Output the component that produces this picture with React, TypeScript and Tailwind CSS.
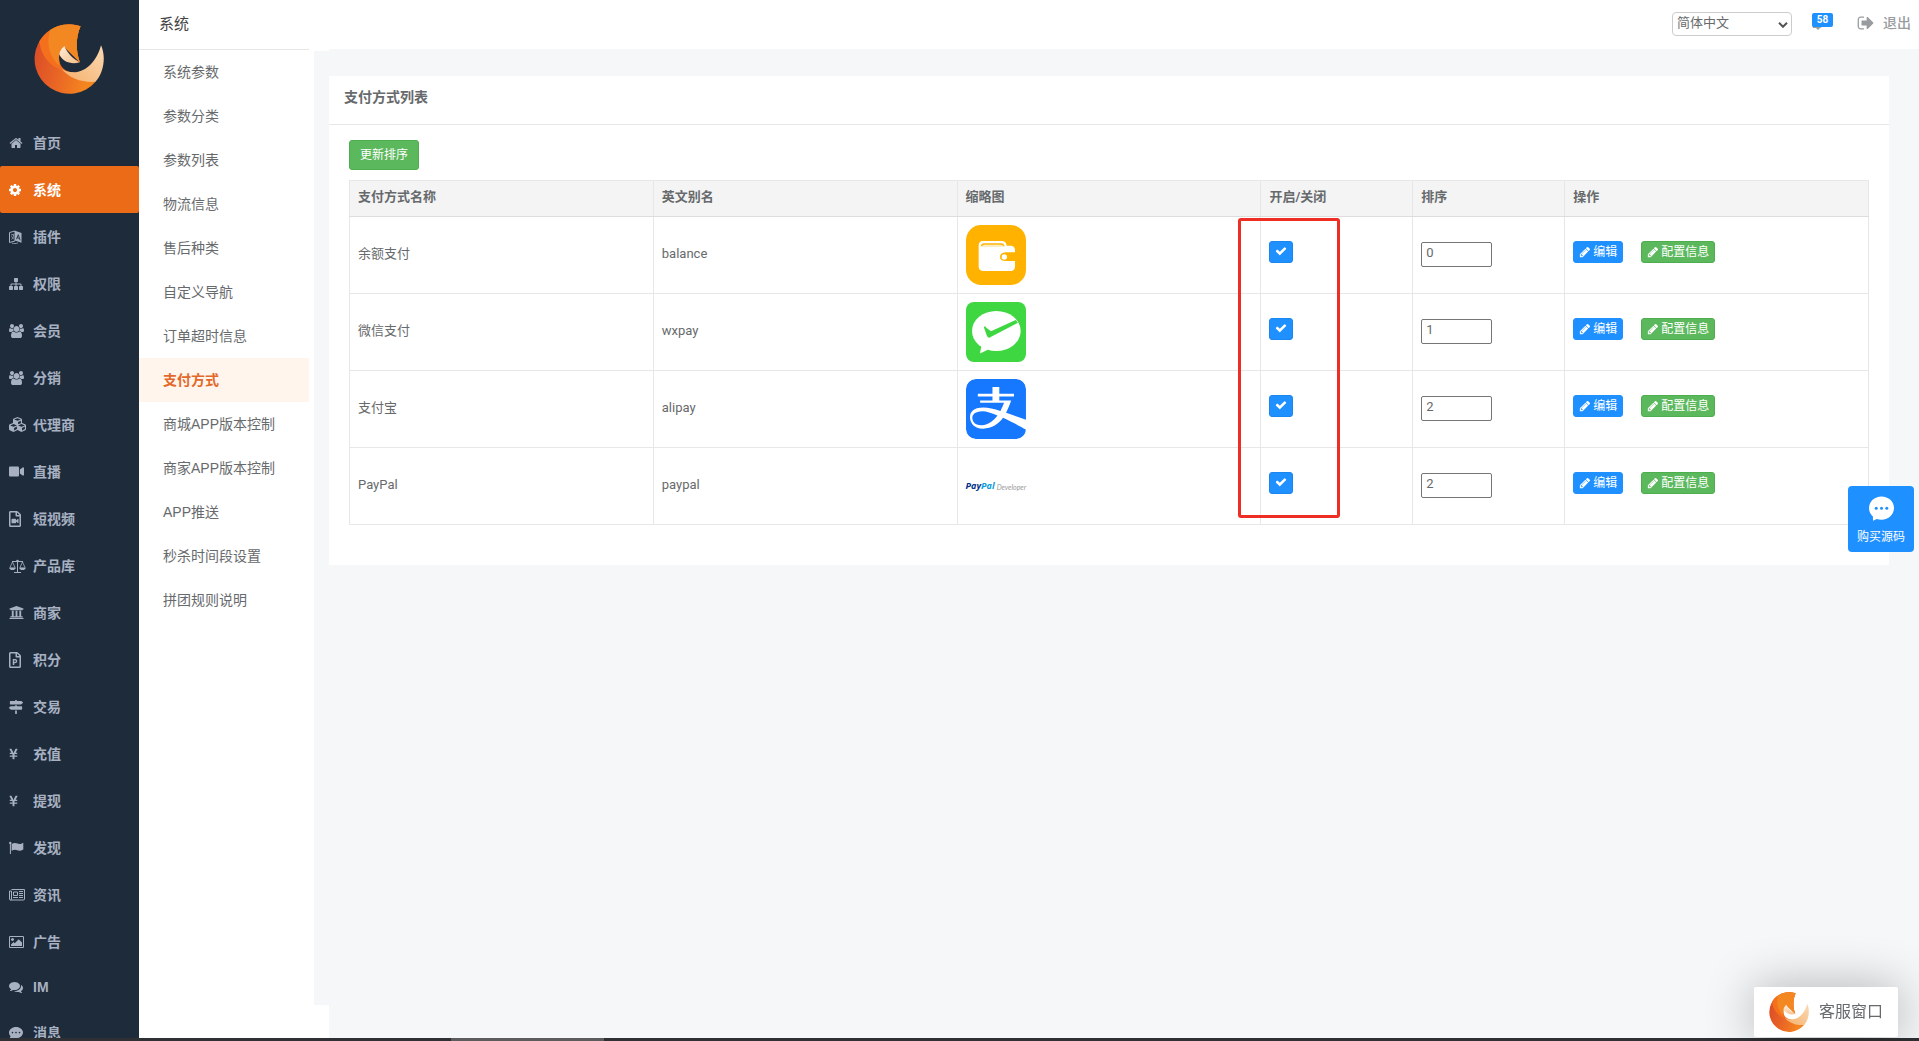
import React from "react";
import {
  FaCommentDots,
  FaCubes,
  FaMapSigns,
  FaRegFilePowerpoint,
  FaRegFileVideo,
  FaUniversity,
  FaVideo,
  FaYenSign,
  FaAlipay,
} from "react-icons/fa";

type GlyphProps = { d: string; className?: string; viewBox?: string };

function Glyph({ d, className, viewBox = "0 0 1792 1792" }: GlyphProps) {
  return (
    <svg viewBox={viewBox} fill="currentColor" className={className} aria-hidden="true">
      <path d={d} />
    </svg>
  );
}

const HOME =
  "M1472 992v480q0 26-19 45t-45 19h-384v-384h-256v384h-384q-26 0-45-19t-19-45v-480q0-1 .5-3t.5-3l575-474 575 474q1 2 1 6zm223-69l-62 74q-8 9-21 11h-3q-13 0-21-7l-692-577-692 577q-12 8-24 7-13-2-21-11l-62-74q-8-10-7-23.5t11-21.5l719-599q32-26 76-26t76 26l244 204v-195q0-14 9-23t23-9h192q14 0 23 9t9 23v408l219 182q10 8 11 21.5t-7 23.5z";
const COG =
  "M1152 896q0-106-75-181t-181-75-181 75-75 181 75 181 181 75 181-75 75-181zm512-109v222q0 12-8 23t-20 13l-185 28q-19 54-39 91 35 50 107 138 10 12 10 25t-9 23q-27 37-99 108t-94 71q-12 0-26-9l-138-108q-44 23-91 38-16 136-29 186-7 28-36 28h-222q-14 0-24.5-8.5t-11.5-21.5l-28-184q-49-16-90-37l-141 107q-10 9-25 9-14 0-25-11-126-114-165-168-7-10-7-23 0-12 8-23 15-21 51-66.5t54-70.5q-27-50-41-99l-183-27q-13-2-21-12.5t-8-23.5v-222q0-12 8-23t19-13l186-28q14-46 39-92-40-57-107-138-10-12-10-24 0-10 9-23 26-36 98.5-107.5t94.5-71.5q13 0 26 10l138 107q44-23 91-38 16-136 29-186 7-28 36-28h222q14 0 24.5 8.5t11.5 21.5l28 184q49 16 90 37l142-107q9-9 24-9 13 0 25 10 129 119 165 170 7 8 7 22 0 12-8 23-15 21-51 66.5t-54 70.5q26 50 41 98l183 28q13 2 21 12.5t8 23.5z";
const SITEMAP =
  "M1792 1248v320q0 40-28 68t-68 28h-320q-40 0-68-28t-28-68v-320q0-40 28-68t68-28h96v-192h-512v192h96q40 0 68 28t28 68v320q0 40-28 68t-68 28h-320q-40 0-68-28t-28-68v-320q0-40 28-68t68-28h96v-192h-512v192h96q40 0 68 28t28 68v320q0 40-28 68t-68 28h-320q-40 0-68-28t-28-68v-320q0-40 28-68t68-28h96v-192q0-52 38-90t90-38h512v-192h-96q-40 0-68-28t-28-68v-320q0-40 28-68t68-28h320q40 0 68 28t28 68v320q0 40-28 68t-68 28h-96v192h512q52 0 90 38t38 90v192h96q40 0 68 28t28 68z";
const USERS =
  "M529 896q-162 5-265 128h-134q-82 0-138-40.5t-56-118.5q0-353 124-353 6 0 43.5 21t97.5 42.5 119 21.5q67 0 133-23-5 37-5 66 0 139 81 256zm1071 637q0 120-73 189.5t-194 69.5h-874q-121 0-194-69.5t-73-189.5q0-53 3.5-103.5t14-109 26.5-108.5 43-97.5 62-81 85.5-53.5 111.5-20q10 0 43 21.5t73 48 107 48 135 21.5 135-21.5 107-48 73-48 43-21.5q61 0 111.5 20t85.5 53.5 62 81 43 97.5 26.5 108.5 14 109 3.5 103.5zm-1024-1277q0 106-75 181t-181 75-181-75-75-181 75-181 181-75 181 75 75 181zm704 384q0 159-112.5 271.5t-271.5 112.5-271.5-112.5-112.5-271.5 112.5-271.5 271.5-112.5 271.5 112.5 112.5 271.5zm576 225q0 78-56 118.5t-138 40.5h-134q-103-123-265-128 81-117 81-256 0-29-5-66 66 23 133 23 59 0 119-21.5t97.5-42.5 43.5-21q124 0 124 353zm-128-609q0 106-75 181t-181 75-181-75-75-181 75-181 181-75 181 75 75 181z";
const PICTURE =
  "M576 576q0 80-56 136t-136 56-136-56-56-136 56-136 136-56 136 56 56 136zm1024 384v448h-1408v-192l320-320 160 160 512-512zm96-704h-1600q-13 0-22.5 9.5t-9.5 22.5v1216q0 13 9.5 22.5t22.5 9.5h1600q13 0 22.5-9.5t9.5-22.5v-1216q0-13-9.5-22.5t-22.5-9.5zm160 32v1216q0 66-47 113t-113 47h-1600q-66 0-113-47t-47-113v-1216q0-66 47-113t113-47h1600q66 0 113 47t47 113z";
const COMMENTS =
  "M1408 768q0 139-94 257t-256.5 186.5-353.5 68.5q-86 0-176-16-124 88-278 128-36 9-86 16h-3q-11 0-20.5-8t-11.5-21q-1-3-1-6.5t.5-6.5 2-6l2.5-5 3.5-5.5 4-5 4.5-5 4-4.5q5-6 23-25t26-29.5 22.5-29 25-38.5 20.5-44q-124-72-195-177t-71-224q0-139 94-257t256.5-186.5 353.5-68.5 353.5 68.5 256.5 186.5 94 257zm384 256q0 120-71 224.5t-195 176.5q10 24 20.5 44t25 38.5 22.5 29 26 29.5 23 25q1 1 4 4.5t4.5 5 4 5 3.5 5.5l2.5 5 2 6 .5 6.5-1 6.5q-3 14-13 22t-22 7q-50-7-86-16-154-40-278-128-90 16-176 16-271 0-472-132 58 4 88 4 161 0 309-45t264-129q125-92 192-212t67-254q0-77-23-152 129 71 204 178t75 230z";
const CHECK =
  "M1671 566q0 40-28 68l-724 724-136 136q-28 28-68 28t-68-28l-136-136-362-362q-28-28-28-68t28-68l136-136q28-28 68-28t68 28l294 295 656-657q28-28 68-28t68 28l136 136q28 28 28 68z";
const PENCIL =
  "M491 1536l91-91-235-235-91 91v107h128v128h107zm523-928q0-22-22-22-10 0-17 7l-542 542q-7 7-7 17 0 22 22 22 10 0 17-7l542-542q7-7 7-17zm-54-192l416 416-832 832h-416v-416zm683 96q0 53-37 90l-166 166-416-416 166-165q36-38 90-38 53 0 91 38l235 234q37 39 37 91z";
const SIGN_OUT =
  "M704 1440q0 4 1 20t.5 26.5-3 23.5-10 19.5-20.5 6.5h-320q-119 0-203.5-84.5t-84.5-203.5v-704q0-119 84.5-203.5t203.5-84.5h320q13 0 22.5 9.5t9.5 22.5q0 4 1 20t.5 26.5-3 23.5-10 19.5-20.5 6.5h-320q-66 0-113 47t-47 113v704q0 66 47 113t113 47h312l11.5 1 11.5 3 8 5.5 7 9 2 13.5zm928-544q0 26-19 45l-544 544q-19 19-45 19t-45-19-19-45v-288h-448q-26 0-45-19t-19-45v-384q0-26 19-45t45-19h448v-288q0-26 19-45t45-19 45 19l544 544q19 19 19 45z";

function LanguageIcon() {
  return (
    <svg viewBox="0 0 13 14" className="h-3.5 w-[13px]" aria-hidden="true">
      <path d="M.5 2.5 6 1v10L.5 12.500z" fill="none" stroke="currentColor" />
      <path d="M2 5l3-.8M2.600 9.500C4 8.200 4.500 7 4.500 5M2.200 6.500 4.800 9" fill="none" stroke="currentColor" strokeWidth=".8" />
      <path d="M6 .8 12.500 3v9.700L6 10.600z" fill="currentColor" />
      <path d="M7.500 9.200 9.300 4.700l1.800 5.600M8.200 7.700l2.200.7" fill="none" stroke="#1e2b3b" strokeWidth=".9" />
      <path d="M3 13.200c2 .7 4 .6 6-.4" fill="none" stroke="currentColor" strokeWidth=".8" />
    </svg>
  );
}

function FlagIcon() {
  return (
    <svg viewBox="0 0 15 14" className="h-3.5 w-[15px]" fill="currentColor" aria-hidden="true">
      <circle cx="1.300" cy="2" r="1.200" />
      <path d="M.9 2h1v11h-1z" />
      <path d="M2.600 3C5 1.500 6.500 1.700 8.500 2.600c2 .8 3.500.4 5.800-.8v6.700c-2.300 1.200-4 1.700-6 .8C6.500 8.400 5 8.400 2.600 9.800z" />
    </svg>
  );
}

function ScaleIcon() {
  return (
    <svg viewBox="0 0 17 14" className="h-3.5 w-[17px]" fill="none" stroke="currentColor" aria-hidden="true">
      <path d="M3 2.500h11M8.500 1v12M5 13.500h7" />
      <path d="M3.500 3 .8 8.800h5.400zM13.500 3l-2.700 5.800h5.400z" strokeWidth=".8" />
      <path d="M.3 9h6.400c-.3 1.400-1.500 2-3.200 2S.6 10.400.3 9zM10.300 9h6.400c-.3 1.400-1.500 2-3.200 2s-2.900-.6-3.200-2z" fill="currentColor" stroke="none" />
      <circle cx="8.500" cy="2" r="1.300" fill="currentColor" stroke="none" />
    </svg>
  );
}

function NewspaperIcon() {
  return (
    <svg viewBox="0 0 16 12" className="h-3 w-4" fill="none" stroke="currentColor" aria-hidden="true">
      <path d="M2.500 .5h13v9.500a1 1 0 0 1-1 1h-13a1 1 0 0 1-1-1V2h2v8a1 1 0 0 1-1 1" />
      <path d="M4.500 3h4v3.500h-4zM4 8.500h5M10 2.500h4M10 4.500h4M10 6.500h4M10 8.500h4" />
    </svg>
  );
}

function BrandLogo({ className, id }: { className: string; id: string }) {
  return (
    <svg viewBox="101 71 212 212" className={className} role="img" aria-label="logo">
      <defs>
        <linearGradient id={id + "-base"} x1="0" y1="0.400" x2="1" y2="0.700">
          <stop offset="0" stopColor="#dc4e27" />
          <stop offset="0.400" stopColor="#e86325" />
          <stop offset="0.900" stopColor="#f5861f" />
        </linearGradient>
        <linearGradient id={id + "-light"} x1="0" y1="1" x2="1" y2="0">
          <stop offset="0" stopColor="#f6b06a" />
          <stop offset="1" stopColor="#fad9b4" />
        </linearGradient>
        <linearGradient id={id + "-leaf"} x1="0" y1="0" x2="1" y2="1">
          <stop offset="0" stopColor="#feeedd" />
          <stop offset="1" stopColor="#f8bd84" />
        </linearGradient>
      </defs>
      <path
        d="M242 78A105 105 0 1 0 288 245L220 217C192 216 172 196 178 160L192 140 240 187C228 155 226 115 242 78Z"
        fill={`url(#${id}-base)`}
      />
      <path
        d="M242 78A105 105 0 0 0 117 123C122 168 150 200 190 212 178 200 174 182 178 160L192 140 240 187C228 155 226 115 242 78Z"
        fill="#f4701c"
      />
      <path
        d="M242 78C210 68 175 72 150 89 138 130 146 168 178 198 174 184 175 172 178 160L192 140 240 187C228 155 226 115 242 78Z"
        fill="#f38822"
      />
      <path
        d="M183 206C210 238 250 249 287 246 312 220 320 170 304 135 292 180 262 216 220 217 205 217 192 213 183 206Z"
        fill={`url(#${id}-light)`}
      />
      <path d="M193 138C182 147 178 158 178 164 188 184 212 195 240 187 218 176 202 160 193 138Z" fill={`url(#${id}-leaf)`} />
    </svg>
  );
}

function WalletThumb() {
  return (
    <svg viewBox="0 0 180 180" className="size-15" role="img" aria-label="余额支付">
      <rect width="180" height="180" rx="46" fill="#ffb300" />
      <path
        d="M50 48H108Q120 48 122 62H136Q146 63 147 74V82H118Q102 84 102 96T118 108H147V126Q146 137 136 138H50Q39 137 38 126V60Q39 49 50 48Z"
        fill="#fff"
      />
      <path d="M44 64Q46 55 54 55H106Q114 55 116 64Z" fill="#ffb300" />
      <path d="M48 62Q52 59 56 59H104Q110 59 112 62Z" fill="#fff" />
      <circle cx="115" cy="96" r="8" fill="#fff" />
    </svg>
  );
}

function WechatThumb() {
  return (
    <svg viewBox="0 0 180 180" className="size-15" role="img" aria-label="微信支付">
      <rect width="180" height="180" rx="24" fill="#3fd741" />
      <ellipse cx="91" cy="87" rx="73" ry="60" fill="#fff" />
      <path d="M48 130 43 153 70 140z" fill="#fff" stroke="#fff" strokeWidth="2" strokeLinejoin="round" />
      <path d="M53 74Q58 72 61 77L75 88 149 54 156 62 74 105Q67 110 63 102Z" fill="#3fd741" />
    </svg>
  );
}

function AlipayThumb() {
  return (
    <span className="block size-15 overflow-hidden rounded-[10px] bg-white text-[#1677ff]">
      <FaAlipay viewBox="0 32 448 448" className="size-15" role="img" aria-label="支付宝" />
    </span>
  );
}

function PaypalThumb() {
  return (
    <span className="flex h-15 items-center gap-0.5 whitespace-nowrap font-['Open_Sans',sans-serif] italic">
      <span className="text-[9px] font-bold text-[#003087]">
        Pay<span className="text-[#0c9bd9]">Pal</span>
      </span>
      <span className="pt-0.5 font-['Lato',sans-serif] text-[7px] text-[#9a9a9a]">Developer</span>
    </span>
  );
}

const navItems: { label: string; icon: React.ReactNode; active?: boolean }[] = [
  { label: "首页", icon: <Glyph d={HOME} className="size-3.5" /> },
  { label: "系统", icon: <Glyph d={COG} viewBox="128 128 1536 1536" className="size-3" />, active: true },
  { label: "插件", icon: <LanguageIcon /> },
  { label: "权限", icon: <Glyph d={SITEMAP} className="size-3.5" /> },
  { label: "会员", icon: <Glyph d={USERS} viewBox="-64 0 1920 1792" className="h-3.5 w-[15px]" /> },
  { label: "分销", icon: <Glyph d={USERS} viewBox="-64 0 1920 1792" className="h-3.5 w-[15px]" /> },
  { label: "代理商", icon: <FaCubes className="size-[17px]" /> },
  { label: "直播", icon: <FaVideo className="size-[15px]" /> },
  { label: "短视频", icon: <FaRegFileVideo viewBox="0 0 384 512" className="h-4 w-3" /> },
  { label: "产品库", icon: <ScaleIcon /> },
  { label: "商家", icon: <FaUniversity className="size-[15px]" /> },
  { label: "积分", icon: <FaRegFilePowerpoint viewBox="0 0 384 512" className="h-4 w-3" /> },
  { label: "交易", icon: <FaMapSigns className="size-3.5" /> },
  { label: "充值", icon: <FaYenSign viewBox="0 0 384 512" className="h-3 w-[9px]" /> },
  { label: "提现", icon: <FaYenSign viewBox="0 0 384 512" className="h-3 w-[9px]" /> },
  { label: "发现", icon: <FlagIcon /> },
  { label: "资讯", icon: <NewspaperIcon /> },
  { label: "广告", icon: <Glyph d={PICTURE} viewBox="-64 0 1920 1792" className="h-3.5 w-[15px]" /> },
  { label: "IM", icon: <Glyph d={COMMENTS} className="size-3.5" /> },
  { label: "消息", icon: <FaCommentDots className="size-3.5" /> },
];

const subItems = [
  "系统参数",
  "参数分类",
  "参数列表",
  "物流信息",
  "售后种类",
  "自定义导航",
  "订单超时信息",
  "支付方式",
  "商城APP版本控制",
  "商家APP版本控制",
  "APP推送",
  "秒杀时间段设置",
  "拼团规则说明",
];

const methods = [
  { name: "余额支付", alias: "balance", thumb: <WalletThumb />, order: "0" },
  { name: "微信支付", alias: "wxpay", thumb: <WechatThumb />, order: "1" },
  { name: "支付宝", alias: "alipay", thumb: <AlipayThumb />, order: "2" },
  { name: "PayPal", alias: "paypal", thumb: <PaypalThumb />, order: "2" },
];

const th = "h-9 border border-[#e7e7e7] border-b-[#dddddd] px-2 pb-2 pt-1 text-left font-bold leading-5";
const td = "h-[77px] border border-[#e7e7e7] px-2";

function Sidebar() {
  return (
    <aside className="w-[139px] shrink-0 overflow-hidden bg-[#1e2b3b]">
      <div className="flex h-[119px] pl-[34px] pt-6">
        <BrandLogo id="brand" className="size-[70px]" />
      </div>
      <nav>
        <ul>
          {navItems.map((item) => (
            <li key={item.label}>
              <a
                href="#"
                className={
                  "flex items-center pl-[9px] text-sm font-bold " +
                  (item.label === "IM" ? "h-11 " : "h-[47px] ") +
                  (item.active ? "rounded-xs bg-[#ec6b17] text-white" : "text-[#a7b1c2]")
                }
              >
                <span className="w-6 shrink-0">{item.icon}</span>
                {item.label}
              </a>
            </li>
          ))}
        </ul>
      </nav>
    </aside>
  );
}

function SubMenu() {
  return (
    <div className="w-[175px] shrink-0 bg-white pr-[5px]">
      <h1 className="h-[50px] border-b border-[#e7e7e7] pl-5 text-[15px] leading-[47px] text-[#444]">系统</h1>
      <ul>
        {subItems.map((label) => (
          <li key={label}>
            <a
              href="#"
              className={
                "flex h-11 items-center pl-6 text-sm " +
                (label === "支付方式" ? "bg-[#fff5ec] font-bold text-[#e2692b]" : "text-[#676a6c]")
              }
            >
              {label}
            </a>
          </li>
        ))}
      </ul>
    </div>
  );
}

function TopBar() {
  return (
    <header className="flex h-[49px] shrink-0 items-start justify-end bg-white pr-2 pt-3 text-[#999c9e]">
      <div className="relative mr-5">
        <select
          aria-label="语言"
          className="block h-6 w-[120px] appearance-none rounded-sm border border-[#cccccc] bg-white pb-0.5 pl-1 text-[13px] leading-5 text-[#676a6c]"
        >
          <option>简体中文</option>
        </select>
        <svg viewBox="0 0 10 6" className="pointer-events-none absolute right-1 top-2.5 h-1.5 w-2.5" aria-hidden="true">
          <path d="M1 .8 5 4.800 9 .8" fill="none" stroke="#555" strokeWidth="2" />
        </svg>
      </div>
      <a href="#" className="relative mr-6 mt-px block h-4 w-[21px]">
        <svg viewBox="0 0 14 5" className="absolute left-0 top-3 h-[5px] w-3.5 fill-[#999c9e]" aria-hidden="true">
          <path d="M0 0h14L8 3 6 5 4 3H1z" />
        </svg>
        <span className="absolute left-0 top-0 h-3.5 w-[21px] rounded-xs bg-[#1e90ff] text-center text-[10px] font-bold leading-3.5 text-white">
          58
        </span>
      </a>
      <a href="#" className="flex items-center gap-2 text-sm font-medium leading-6 -mt-px">
        <Glyph d={SIGN_OUT} className="size-[18px]" />
        退出
      </a>
    </header>
  );
}

function PaymentTable() {
  return (
    <table className="mt-2.5 w-full table-fixed border-collapse text-[13px]">
      <colgroup>
        <col className="w-1/5" />
        <col className="w-1/5" />
        <col className="w-1/5" />
        <col className="w-1/10" />
        <col className="w-1/10" />
        <col className="w-1/5" />
      </colgroup>
      <thead className="bg-[#f4f4f4]">
        <tr>
          <th className={th}>支付方式名称</th>
          <th className={th}>英文别名</th>
          <th className={th}>缩略图</th>
          <th className={th}>开启/关闭</th>
          <th className={th}>排序</th>
          <th className={th}>操作</th>
        </tr>
      </thead>
      <tbody>
        {methods.map((m, i) => (
          <tr key={m.name}>
            <td className={td + " pb-0.5"}>{m.name}</td>
            <td className={td + " pb-0.5"}>{m.alias}</td>
            <td className={td}>{m.thumb}</td>
            <td className={td + " relative pb-1.5"}>
              <label className="relative block h-[22px] w-6">
                <input
                  type="checkbox"
                  defaultChecked
                  aria-label={m.name + " 开启"}
                  className="block h-[22px] w-6 appearance-none rounded-[3px] border border-[#1a86ee] bg-[#1e90ff]"
                />
                <Glyph d={CHECK} className="pointer-events-none absolute left-1.5 top-1 size-3 text-white" />
              </label>
              {i === 0 && (
                <span className="pointer-events-none absolute -left-[23px] top-px z-10 h-[300px] w-[102px] rounded-[3px] border-[3px] border-[#ee2e24]" />
              )}
            </td>
            <td className={td + " pb-0.5"}>
              <input
                type="text"
                defaultValue={m.order}
                aria-label={m.name + " 排序"}
                className="block h-[25px] w-[71px] rounded-xs border border-[#767676] bg-white px-1 pb-1"
              />
            </td>
            <td className={td + " pb-1.5"}>
              <div className="flex gap-[18px] text-xs text-white">
                <button
                  type="button"
                  className="flex h-[22px] items-center gap-0.5 rounded-[3px] border border-[#1e90ff] bg-[#1e90ff] px-[5px]"
                >
                  <Glyph d={PENCIL} className="size-3" />
                  编辑
                </button>
                <button
                  type="button"
                  className="flex h-[22px] items-center gap-0.5 rounded-[3px] border border-[#4cae4c] bg-[#5cb85c] px-[5px]"
                >
                  <Glyph d={PENCIL} className="size-3" />
                  配置信息
                </button>
              </div>
            </td>
          </tr>
        ))}
      </tbody>
    </table>
  );
}

export default function App() {
  return (
    <div className="flex h-screen flex-col overflow-hidden bg-[#f5f7f9] font-['Roboto','Noto_Sans_CJK_SC',sans-serif] text-[#676a6c]">
      <div className="flex min-h-0 flex-1">
        <div className="flex font-['Liberation_Sans','Noto_Sans_CJK_SC',sans-serif]">
          <Sidebar />
          <SubMenu />
        </div>
        <div className="flex min-w-0 flex-1 flex-col">
          <TopBar />
          <div className="flex min-h-0 flex-1">
            <div className="flex w-[15px] shrink-0 flex-col justify-between">
              <div className="h-0.5 bg-white" />
              <div className="h-[33px] bg-white" />
            </div>
            <main className="min-w-0 flex-1 pr-[30px] pt-[27px]">
              <section className="bg-white pb-10">
                <h2 className="h-[49px] border-b border-[#e7e7e7] px-[15px] pt-[11px] text-sm font-bold">支付方式列表</h2>
                <div className="px-5 pt-[15px]">
                  <button
                    type="button"
                    className="block h-[30px] rounded-[3px] border border-[#4cae4c] bg-[#5cb85c] px-2.5 text-xs text-white"
                  >
                    更新排序
                  </button>
                  <PaymentTable />
                </div>
              </section>
            </main>
          </div>
        </div>
      </div>

      <div className="flex h-[3px] shrink-0 bg-[#2f3033]">
        <div className="ml-[23.500%] w-[8%] bg-[#5c5c5e]" />
      </div>

      <button
        type="button"
        className="fixed right-[5px] top-[486px] flex size-[66px] flex-col items-center rounded-sm bg-[#1e90ff] pt-2.5 text-xs text-white"
      >
        <svg viewBox="0 0 25 25" className="size-[25px]" aria-hidden="true">
          <path d="M12.500 .5C19.500 .5 25 5.500 25 12s-5.500 11.700-12.500 11.700c-1.800 0-3.400-.3-4.700-.8L4 24.800 3.900 20.500C1.500 18.400 0 15.500 0 12 0 5.500 5.500.5 12.500.5z" fill="#fff" />
          <circle cx="7.200" cy="12.200" r="1.500" fill="#1e90ff" />
          <circle cx="12.500" cy="12.200" r="1.500" fill="#1e90ff" />
          <circle cx="17.800" cy="12.200" r="1.500" fill="#1e90ff" />
        </svg>
        <span className="mt-2 leading-4">购买源码</span>
      </button>

      <button
        type="button"
        className="fixed bottom-1 right-[21px] flex h-[50px] w-36 items-center gap-2.5 rounded-xs bg-white pl-[15px] text-base shadow-[1px_1px_50px_rgba(0,0,0,0.3)]"
      >
        <BrandLogo id="chat" className="size-10" />
        客服窗口
      </button>
    </div>
  );
}
